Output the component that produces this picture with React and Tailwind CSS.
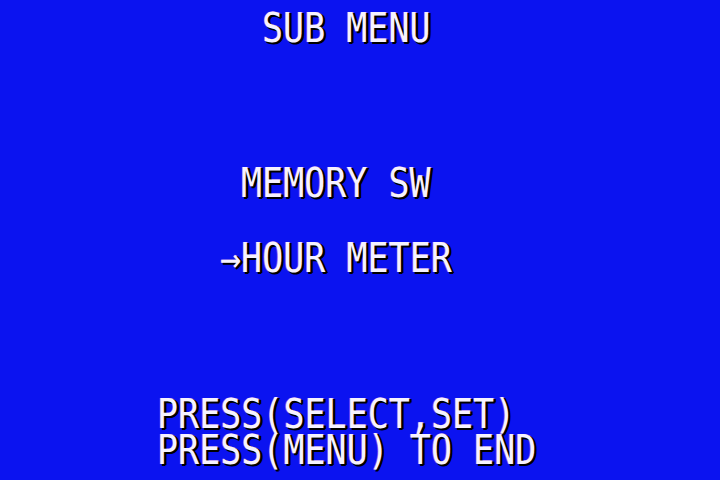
export default function App() {
  // OSD text: white glyphs, black edge to the lower right, tiny colour fringe
  const line =
    "origin-left scale-x-[0.875] whitespace-pre leading-[36px] text-[40px] text-[#f6f2ff] font-['DejaVu_Sans_Mono',monospace] [text-shadow:2px_2px_0_#000,3px_1px_0_#000,-1px_0_0_rgba(255,80,255,0.55),1px_0_0_rgba(255,255,120,0.35)]";

  return (
    <div className="w-[720px] h-[480px] overflow-hidden bg-[#0b13f0]">
      <div className="flex flex-col pl-[157px] pt-[10px]">
        <div className={`${line} ml-[105px]`}>SUB MENU</div>
        <div className={`${line} ml-[84px] mt-[119px]`}>MEMORY SW</div>
        <div className={`${line} ml-[63px] mt-[39px]`}>→HOUR METER</div>
        <div className={`${line} mt-[120px]`}>PRESS(SELECT,SET)</div>
        <div className={line}>PRESS(MENU) TO END</div>
      </div>
    </div>
  );
}
